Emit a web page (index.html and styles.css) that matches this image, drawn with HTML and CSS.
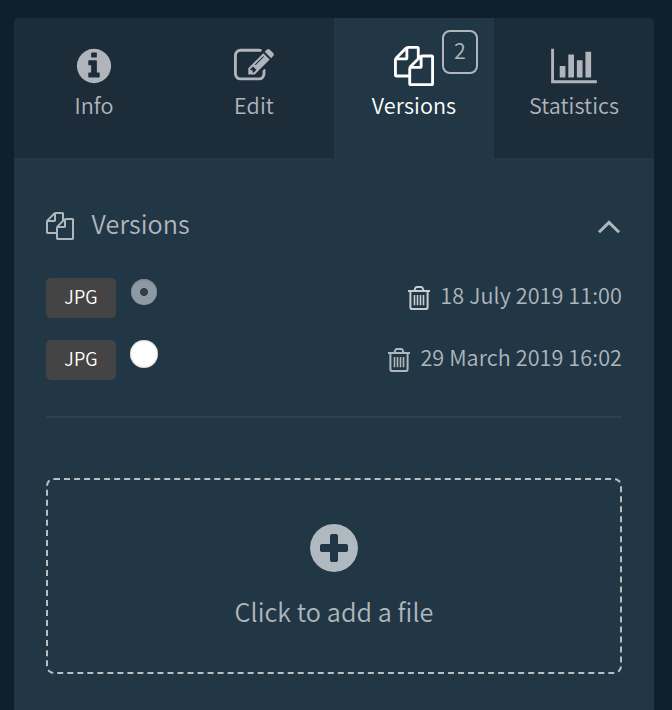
FILE: index.html
```html
<!DOCTYPE html>
<html lang="en">
<head>
<meta charset="utf-8">
<title>Versions</title>
<link rel="stylesheet" href="styles.css">
</head>
<body>
<svg class="sprite" aria-hidden="true">
  <symbol id="files" viewBox="0 0 1792 1792"><path d="M1696 384q40 0 68 28t28 68v1216q0 40-28 68t-68 28h-960q-40 0-68-28t-28-68v-288h-544q-40 0-68-28t-28-68v-672q0-40 20-88t48-76l408-408q28-28 76-48t88-20h416q40 0 68 28t28 68v328q68-40 128-40h416zm-544 213l-299 299h299v-299zm-640-384l-299 299h299v-299zm196 647l316-316v-416h-384v416q0 40-28 68t-68 28h-416v640h512v-256q0-40 20-88t48-76zm956 804v-1152h-384v416q0 40-28 68t-68 28h-416v640h896z"/></symbol>
  <symbol id="trash" viewBox="0 0 24 24"><g fill="none" stroke="currentColor"><path stroke-width="2" d="M1 5h22M7.5 4.5l.8-2.3q.4-1.2 1.6-1.2h4.2q1.2 0 1.6 1.2l.8 2.3M3.4 5v16.2q0 1.8 1.8 1.8h13.6q1.8 0 1.8-1.8V5"/><path stroke-width="1.6" d="M7.5 9v10.3M10.5 9v10.3M13.5 9v10.3M16.5 9v10.3"/></g></symbol>
</svg>
<main class="panel">
  <nav class="tabs">
    <a class="tab"><svg class="tab-icon" viewBox="0 0 1792 1792"><path d="M1152 1376v-160q0-14-9-23t-23-9h-96v-512q0-14-9-23t-23-9h-320q-14 0-23 9t-9 23v160q0 14 9 23t23 9h96v320h-96q-14 0-23 9t-9 23v160q0 14 9 23t23 9h448q14 0 23-9t9-23zm-128-896v-160q0-14-9-23t-23-9h-192q-14 0-23 9t-9 23v160q0 14 9 23t23 9h192q14 0 23-9t9-23zm640 416q0 209-103 385.5t-279.5 279.5-385.5 103-385.5-103-279.5-279.5-103-385.5 103-385.5 279.5-279.5 385.5-103 385.5 103 279.5 279.5 103 385.5z"/></svg><span>Info</span></a>
    <a class="tab"><svg class="tab-icon" viewBox="0 0 1792 1792"><path d="M888 1184l116-116-152-152-116 116v56h96v96h56zm440-720q-16-16-33 1l-350 350q-17 17-1 33t33-1l350-350q17-17 1-33zm80 594v190q0 119-84.5 203.5t-203.5 84.5h-832q-119 0-203.5-84.5t-84.5-203.5v-832q0-119 84.5-203.5t203.5-84.5h832q63 0 117 25 15 7 18 23 3 17-9 29l-49 49q-14 14-32 8-23-6-45-6h-832q-66 0-113 47t-47 113v832q0 66 47 113t113 47h832q66 0 113-47t47-113v-126q0-13 9-22l64-64q15-15 35-7t20 29zm-96-738l288 288-672 672h-288v-288zm444 132l-92 92-288-288 92-92q28-28 68-28t68 28l152 152q28 28 28 68t-28 68z"/></svg><span>Edit</span></a>
    <a class="tab active"><svg class="tab-icon"><use href="#files"/></svg><span>Versions</span><b class="badge">2</b></a>
    <a class="tab"><svg class="tab-icon wide" viewBox="0 0 2048 1792"><path d="M640 896v512h-256v-512h256zm384-512v1024h-256v-1024h256zm1024 1152v128h-2048v-1536h128v1408h1920zm-640-896v768h-256v-768h256zm384-384v1152h-256v-1152h256z"/></svg><span>Statistics</span></a>
  </nav>
  <section class="content">
    <header class="heading">
      <svg class="heading-icon"><use href="#files"/></svg>
      <h2>Versions</h2>
      <svg class="chevron" viewBox="0 0 24 14"><path d="M2 12.2 12 2.4l10 9.8"/></svg>
    </header>
    <ul class="versions">
      <li class="version"><span class="format">JPG</span><span class="radio selected"></span><svg class="trash bright"><use href="#trash"/></svg><time>18 July 2019 11:00</time></li>
      <li class="version"><span class="format">JPG</span><span class="radio"></span><svg class="trash"><use href="#trash"/></svg><time>29 March 2019 16:02</time></li>
    </ul>
    <div class="dropzone">
      <svg class="plus" viewBox="0 0 1792 1792"><path d="M1344 960v-128q0-26-19-45t-45-19h-256v-256q0-26-19-45t-45-19h-128q-26 0-45 19t-19 45v256h-256q-26 0-45 19t-19 45v128q0 26 19 45t45 19h256v256q0 26 19 45t45 19h128q26 0 45-19t19-45v-256h256q26 0 45-19t19-45zm320-64q0 209-103 385.5t-279.5 279.5-385.5 103-385.5-103-279.5-279.5-103-385.5 103-385.5 279.5-279.5 385.5-103 385.5 103 279.5 279.5 103 385.5z"/></svg>
      <span>Click to add a file</span>
    </div>
  </section>
</main>
</body>
</html>
```
FILE: styles.css
```css
* { box-sizing: border-box; }
body {
  margin: 0;
  height: 710px;
  padding: 18px 18px 0 14px;
  overflow: hidden;
  background: #0f1f2e;
  color: #afb6bc;
  font: 350 21.6px/32px "Noto Sans CJK SC", "Noto Sans", sans-serif;
  letter-spacing: 0.08px;
}
svg { display: block; flex: none; fill: currentColor; }
.sprite { position: absolute; width: 0; height: 0; }
.panel {
  height: 692px;
  border-radius: 5px 5px 0 0;
  overflow: hidden;
  background: #223745;
}
.tabs { display: grid; grid-template-columns: repeat(4, 160px); height: 140px; }
.tab {
  position: relative;
  display: flex;
  flex-direction: column;
  align-items: center;
  padding-top: 27.5px;
  background: #1c2c39;
  color: #b0b4bb;
}
.tab.active { background: #223745; color: #fff; }
.tab-icon { width: 40px; height: 40px; margin-bottom: 3px; }
.tab-icon.wide { width: 46px; }
.badge {
  position: absolute;
  top: 12px;
  right: 16px;
  width: 36px;
  height: 44px;
  border: 2px solid #afb6bc;
  border-radius: 8px;
  color: #afb6bc;
  font-weight: 350;
  line-height: 35px;
  text-align: center;
}
.content { padding: 48px 32px 0; }
.heading { display: flex; align-items: center; height: 40px; }
.heading-icon { width: 28px; height: 28px; }
.heading h2 { flex: 1; margin: -7px 0 0 17.5px; font-size: 25.2px; font-weight: 350; line-height: 40px; }
.chevron { width: 24px; height: 14px; margin: 2px 1px 0 0; fill: none; stroke: currentColor; stroke-width: 3; }
.versions {
  margin: 32px 0 0;
  padding: 0 0 36px;
  border-bottom: 2px solid #2c414e;
  list-style: none;
}
.version { display: flex; align-items: flex-start; height: 40px; }
.version + .version { margin-top: 22px; }
.format {
  width: 70px;
  height: 40px;
  border-radius: 5px;
  background: #444;
  color: #fff;
  font-size: 18px;
  line-height: 37px;
  text-align: center;
}
.radio {
  width: 28px;
  height: 28px;
  margin-left: 14px;
  border-radius: 50%;
  background: #fff;
  box-shadow: inset 0 0 2px #8d8d8d;
}
.radio.selected {
  width: 26px;
  height: 26px;
  margin: 1px 1px 0 15px;
  background: radial-gradient(circle, #2f404b 3.6px, #8e9aa3 4.4px);
  box-shadow: 0 0 1px #172733, inset 0 1px 2px #75838d;
}
.trash { width: 24px; height: 24px; margin: 8px 9px 0 auto; }
.trash.bright { color: #c9cccf; }
.version time { line-height: 34px; }
.dropzone {
  display: flex;
  flex-direction: column;
  align-items: center;
  height: 196px;
  margin-top: 60px;
  padding-top: 40px;
  border: 2px dashed #b7bfc2;
  border-radius: 8px;
  font-size: 25.2px;
  line-height: 40px;
}
.plus { width: 56px; height: 56px; margin-bottom: 15px; color: #b0b9c0; }
```
